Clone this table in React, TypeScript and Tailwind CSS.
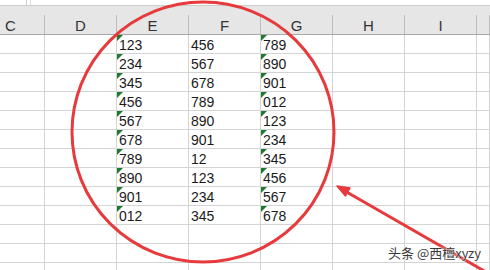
import React from 'react'

const columns = ['C', 'D', 'E', 'F', 'G', 'H', 'I', '']
const widths = ['w-[45px]', 'w-[72px]', 'w-[72px]', 'w-[72px]', 'w-[72px]', 'w-[72px]', 'w-[72px]', 'flex-1']

const data: string[][] = [
  ['123', '456', '789'],
  ['234', '567', '890'],
  ['345', '678', '901'],
  ['456', '789', '012'],
  ['567', '890', '123'],
  ['678', '901', '234'],
  ['789', '12', '345'],
  ['890', '123', '456'],
  ['901', '234', '567'],
  ['012', '345', '678'],
]

// cells stored as text get the little green marker
const textCols = [2, 4]

function Flag() {
  return (
    <span className="absolute left-0 top-0 w-0 h-0 border-t-[6px] border-r-[6px] border-t-[#1d7a30] border-r-transparent" />
  )
}

export default function App() {
  const rows = Array.from({ length: 13 }, (_, i) => data[i] ?? null)

  return (
    <div className="relative w-[490px] h-[270px] overflow-hidden bg-white font-['Liberation_Sans',Arial,sans-serif]">
      {/* formula bar remnant */}
      <div className="h-[5px] flex">
        <div className="w-[27px] border-r border-[#cfcfcf]" />
        <div className="w-[4px] border-r border-[#e2e2e2]" />
      </div>

      {/* column headers */}
      <div className="bg-[#e6e6e6] border-t border-[#cdcdcd] border-b border-b-[#a8a8a8]">
        <div className="h-[9px]" />
        <div className="flex h-[19px]">
          {columns.map((c, i) => (
            <div
              key={i}
              className={`${widths[i]} shrink-0 border-r border-[#bdbdbd] text-center text-[15px] leading-[21px] text-[#333] ${i === 0 ? 'text-left pl-[5px]' : ''}`}
            >
              {c}
            </div>
          ))}
        </div>
      </div>

      {/* grid */}
      <div className="flex flex-col">
        {rows.map((row, r) => (
          <div key={r} className="flex h-[19px] border-b border-[#d4d4d4]">
            {columns.map((_, i) => {
              const value = row && i >= 2 && i <= 4 ? row[i - 2] : ''
              return (
                <div
                  key={i}
                  className={`${widths[i]} shrink-0 relative border-r border-[#d4d4d4] pl-[2px] text-[14px] leading-[20px] text-[#1a1a1a] overflow-visible`}
                >
                  {row && textCols.includes(i) && <Flag />}
                  {value}
                </div>
              )
            })}
          </div>
        ))}
      </div>

      {/* red annotation */}
      <svg className="absolute inset-0 pointer-events-none" width="490" height="270" viewBox="0 0 490 270">
        <ellipse cx="203" cy="132" rx="131" ry="130" fill="none" stroke="#e63a3c" strokeWidth="3" />
        <line x1="344" y1="190.5" x2="486" y2="272" stroke="#e63a3c" strokeWidth="3" strokeLinecap="round" />
        <polygon points="337,186 350,188 345.5,196" fill="#e63a3c" stroke="#e63a3c" strokeWidth="1.5" strokeLinejoin="round" />
      </svg>

      {/* watermark */}
      <div className="absolute left-[388px] top-[245px] text-[13px] leading-[16px] text-[#3a3a3a] font-['Noto_Sans_CJK_SC','Noto_Sans',sans-serif] [text-shadow:0_0_2px_#fff,0_0_2px_#fff]">
        头条 @西檀xyzy
      </div>
    </div>
  )
}
